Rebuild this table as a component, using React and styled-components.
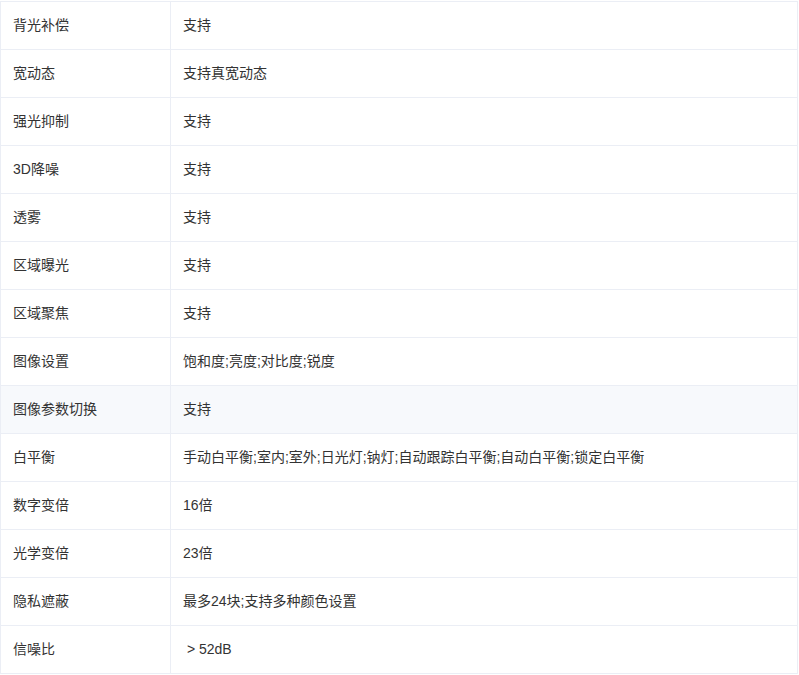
import React from "react";
import styled, { createGlobalStyle } from "styled-components";

const Global = createGlobalStyle`
  html, body { margin: 0; padding: 0; background: #fff; }
  body {
    font-family: "Liberation Sans", Arial, "Noto Sans CJK SC", sans-serif;
    color: #333;
  }
`;

const Wrap = styled.div`
  padding-top: 1px;
  width: 798px;
`;

const Table = styled.table`
  width: 798px;
  border-collapse: collapse;
  table-layout: fixed;
  font-size: 14px;
  color: #333;
`;

const Row = styled.tr`
  background: ${(p) => (p.$hover ? "#f7f9fc" : "#fff")};
`;

const Cell = styled.td`
  height: 48px;
  box-sizing: border-box;
  padding: 0 12px 2px;
  border: 1px solid #ebeef5;
  line-height: 20px;
  vertical-align: middle;
  white-space: nowrap;
  width: ${(p) => p.$w || "auto"};
`;

const rows = [
  ["背光补偿", "支持"],
  ["宽动态", "支持真宽动态"],
  ["强光抑制", "支持"],
  ["3D降噪", "支持"],
  ["透雾", "支持"],
  ["区域曝光", "支持"],
  ["区域聚焦", "支持"],
  ["图像设置", "饱和度;亮度;对比度;锐度"],
  ["图像参数切换", "支持"],
  ["白平衡", "手动白平衡;室内;室外;日光灯;钠灯;自动跟踪白平衡;自动白平衡;锁定白平衡"],
  ["数字变倍", "16倍"],
  ["光学变倍", "23倍"],
  ["隐私遮蔽", "最多24块;支持多种颜色设置"],
  ["信噪比", "\u00a0> 52dB"],
];

export default function App() {
  return (
    <Wrap>
      <Global />
      <Table>
        <tbody>
          {rows.map(([k, v], i) => (
            <Row key={k} $hover={i === 8}>
              <Cell $w="170px">{k}</Cell>
              <Cell>{v}</Cell>
            </Row>
          ))}
        </tbody>
      </Table>
    </Wrap>
  );
}
